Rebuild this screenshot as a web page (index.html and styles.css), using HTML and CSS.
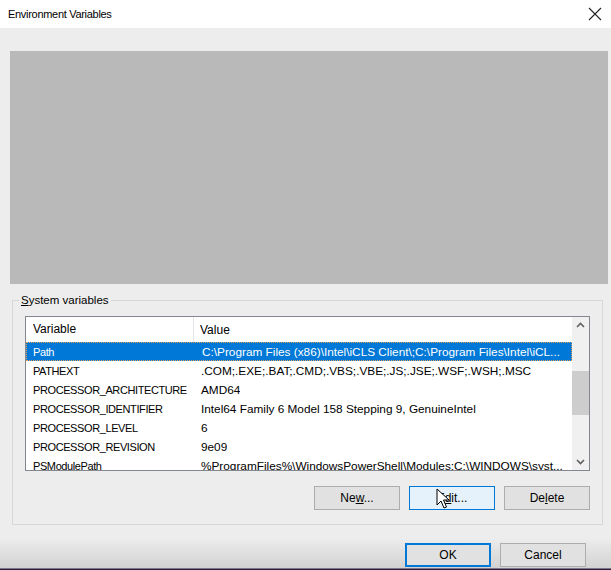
FILE: index.html
```html
<!DOCTYPE html>
<html lang="en">
<head>
    <meta charset="UTF-8">
    <title>Environment Variables</title>
    <link rel="stylesheet" href="styles.css">
</head>
<body>

<div class="window">
    <div class="titlebar">
        <span class="title">Environment Variables</span>
        <svg class="close" width="14" height="14" viewBox="0 0 14 14">
            <path d="M1 1 L13 13 M13 1 L1 13" stroke="#222" stroke-width="1.1" fill="none"/>
        </svg>
    </div>

    <div class="body">
        <div class="user-area"></div>

        <fieldset class="group">
            <legend><u>S</u>ystem variables</legend>

            <div class="listbox">
                <div class="list">
                    <div class="row head">
                        <div class="cell name">Variable</div>
                        <div class="cell value">Value</div>
                    </div>
                    <div class="row selected">
                        <div class="cell name">Path</div>
                        <div class="cell value">C:\Program Files (x86)\Intel\iCLS Client\;C:\Program Files\Intel\iCL...</div>
                    </div>
                    <div class="row">
                        <div class="cell name">PATHEXT</div>
                        <div class="cell value">.COM;.EXE;.BAT;.CMD;.VBS;.VBE;.JS;.JSE;.WSF;.WSH;.MSC</div>
                    </div>
                    <div class="row">
                        <div class="cell name">PROCESSOR_ARCHITECTURE</div>
                        <div class="cell value">AMD64</div>
                    </div>
                    <div class="row">
                        <div class="cell name">PROCESSOR_IDENTIFIER</div>
                        <div class="cell value">Intel64 Family 6 Model 158 Stepping 9, GenuineIntel</div>
                    </div>
                    <div class="row">
                        <div class="cell name">PROCESSOR_LEVEL</div>
                        <div class="cell value">6</div>
                    </div>
                    <div class="row">
                        <div class="cell name">PROCESSOR_REVISION</div>
                        <div class="cell value">9e09</div>
                    </div>
                    <div class="row">
                        <div class="cell name">PSModulePath</div>
                        <div class="cell value">%ProgramFiles%\WindowsPowerShell\Modules;C:\WINDOWS\syst...</div>
                    </div>
                </div>
                <div class="scrollbar">
                    <svg class="arrow" width="17" height="17" viewBox="0 0 17 17">
                        <path d="M5 10 L8.5 6.5 L12 10" stroke="#606060" stroke-width="1.6" fill="none"/>
                    </svg>
                    <div class="track">
                        <div class="thumb"></div>
                    </div>
                    <svg class="arrow" width="17" height="17" viewBox="0 0 17 17">
                        <path d="M5 7 L8.5 10.5 L12 7" stroke="#606060" stroke-width="1.6" fill="none"/>
                    </svg>
                </div>
            </div>

            <div class="buttons">
                <button>Ne<u>w</u>...</button>
                <button class="hover">E<u>d</u>it...</button>
                <button>De<u>l</u>ete</button>
            </div>
        </fieldset>

        <div class="footer buttons">
            <button class="default">OK</button>
            <button>Cancel</button>
        </div>
    </div>

    <svg class="cursor" width="14" height="22" viewBox="0 0 14 22">
        <path d="M1 1 L1 17 L5 13 L8 20 L10.5 19 L7.5 12 L13 12 Z" fill="#fff" stroke="#000" stroke-width="1"/>
    </svg>
</div>

</body>
</html>
```

FILE: styles.css
```css
body {
    margin: 0;
    font-family: "Liberation Sans", Arial, sans-serif;
    font-size: 12px;
    color: #000;
    background-color: #ededed;
}

.window {
    position: relative;
    width: 611px;
    height: 570px;
    overflow: hidden;
    background: linear-gradient(to bottom, #ededed 0, #ededed 538px, #d2d2d2 568px, #2b1d3d 569px);
}

.titlebar {
    height: 28px;
    background-color: #fff;
    display: flex;
    align-items: center;
    justify-content: space-between;
    padding: 0 8px 0 8px;
}

.title {
    font-size: 11px;
    letter-spacing: -0.3px;
    color: #000;
}

.close {
    margin-right: 1px;
}

.body {
    padding: 23px 3px 0 10px;
}

.user-area {
    height: 233px;
    background-color: #b9b9b9;
}

.group {
    margin: 10px 5px 0 2px;
    padding: 10px 12px 12px 12px;
    border: 1px solid #d7d7d7;
    height: 231px;
    box-sizing: border-box;
}

.group legend {
    padding: 0 2px;
    margin-left: -6px;
    font-size: 11.5px;
}

.listbox {
    display: flex;
    height: 155px;
    border: 1px solid #828790;
    background-color: #fff;
    box-sizing: border-box;
}

.list {
    flex: 1;
    overflow: hidden;
}

.row {
    display: flex;
    height: 19px;
    align-items: center;
    box-sizing: border-box;
    white-space: nowrap;
}

.row.head {
    height: 25px;
}

.cell.name {
    width: 168px;
    padding-left: 7px;
    box-sizing: border-box;
    flex-shrink: 0;
    font-size: 11px;
    letter-spacing: -0.4px;
}

.cell.value {
    padding-left: 7px;
    overflow: hidden;
    font-size: 11.8px;
}

.row.head .cell {
    font-size: 12px;
    letter-spacing: 0;
}

.row.head .cell.name {
    border-right: 1px solid #e5e5e5;
    height: 25px;
    line-height: 25px;
}

.row.head .cell.value {
    padding-left: 6px;
}

.row.selected {
    background-color: #0078d7;
    color: #fff;
    border: 1px dotted #e6a15a;
}

.row.selected .cell.name {
    padding-left: 6px;
}

.scrollbar {
    width: 17px;
    display: flex;
    flex-direction: column;
    background-color: #f0f0f0;
}

.arrow {
    display: block;
}

.track {
    flex: 1;
    padding-top: 37px;
}

.thumb {
    height: 44px;
    background-color: #cdcdcd;
}

.buttons {
    display: flex;
    justify-content: flex-end;
    gap: 9px;
    margin-top: 15px;
}

.buttons button {
    width: 86px;
    height: 24px;
    font-family: "Liberation Sans", Arial, sans-serif;
    font-size: 12px;
    color: #000;
    background-color: #e1e1e1;
    border: 1px solid #adadad;
    padding: 0;
}

.buttons button.hover {
    background-color: #e5f1fb;
    border-color: #0078d7;
}

.footer {
    margin-top: 18px;
    margin-right: 22px;
}

.footer button.default {
    border: 2px solid #0078d7;
}

.cursor {
    position: absolute;
    left: 436px;
    top: 488px;
}
```
